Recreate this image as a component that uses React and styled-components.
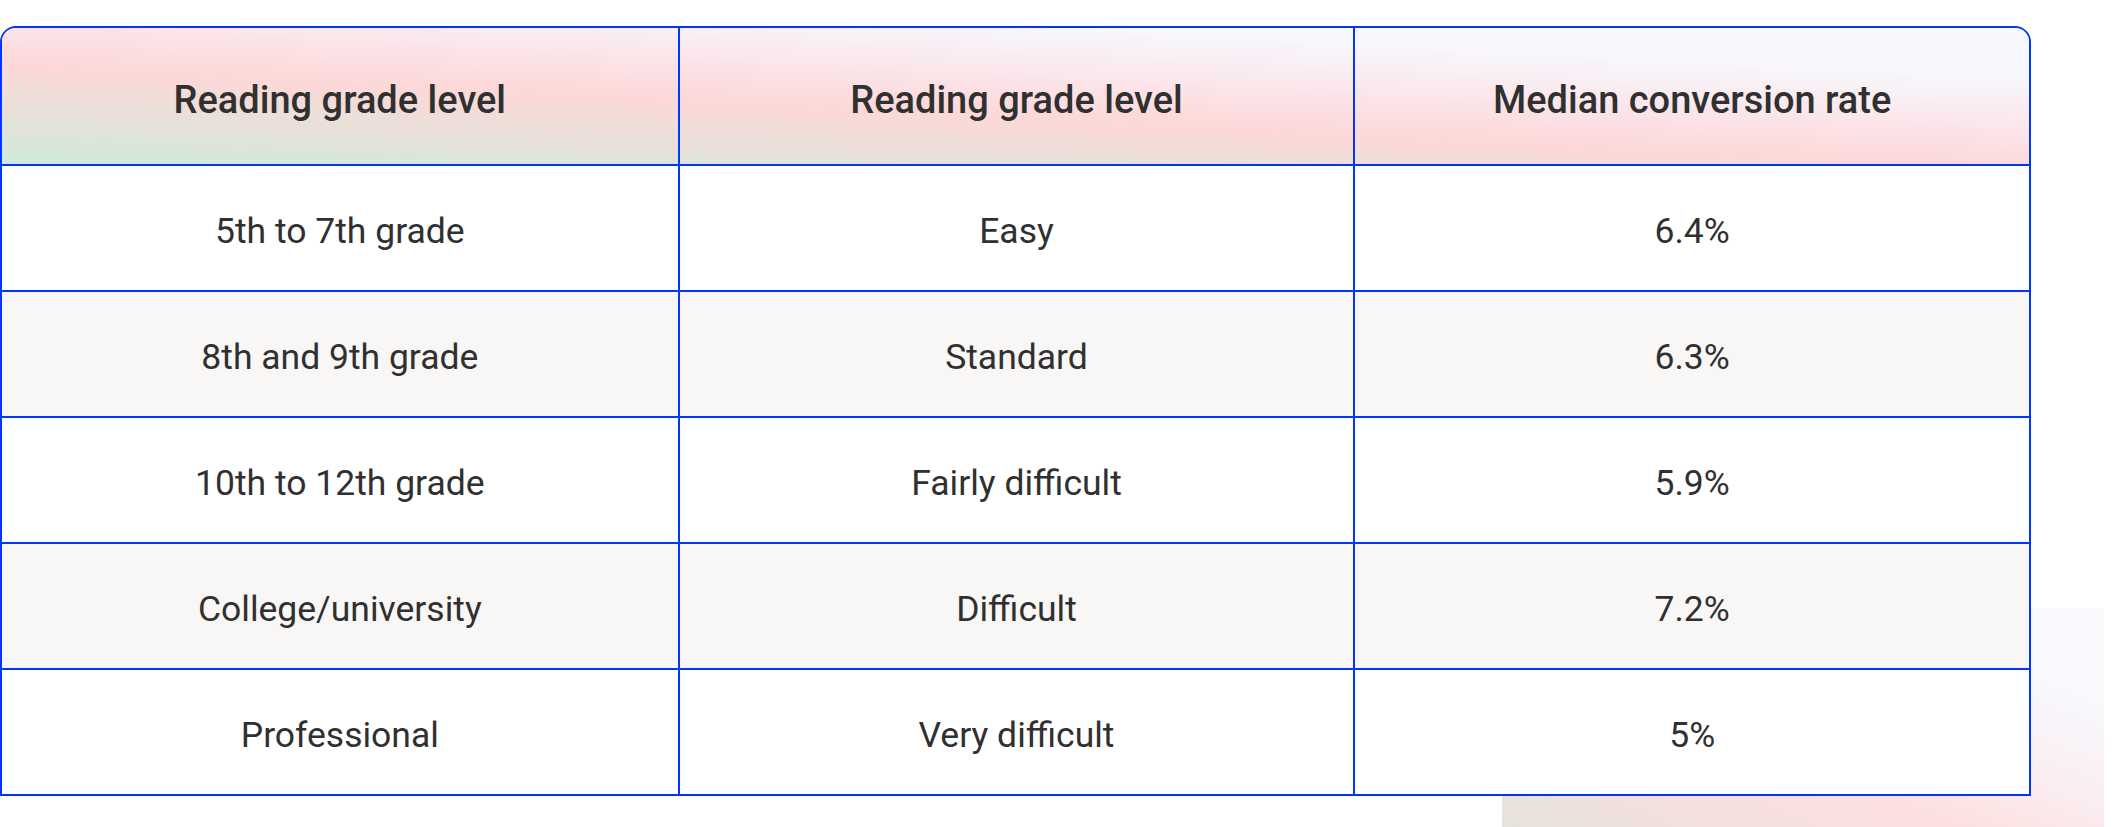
import styled, { createGlobalStyle } from 'styled-components';

const GlobalStyle = createGlobalStyle`
  html, body {
    margin: 0;
    padding: 0;
    background: #fff;
  }
  body {
    font-family: Roboto, "Liberation Sans", sans-serif;
    color: #2e2e2e;
  }
`;

const Page = styled.div`
  position: relative;
  width: 2122px;
  height: 827px;
  overflow: hidden;
  padding-top: 26px;
  box-sizing: border-box;
`;

const Glow = styled.div`
  position: absolute;
  left: 1502px;
  top: 608px;
  width: 602px;
  height: 260px;
  background: linear-gradient(22deg, #dfe5db 0%, #f1e0dd 22%, #fde0e0 45%, #faeef2 62%, #f8f8fd 80%);
  z-index: 0;
`;

const Table = styled.div`
  position: relative;
  z-index: 1;
  width: 2031px;
  box-sizing: border-box;
  border: 2px solid #0036ff;
  border-radius: 16px 16px 0 0;
  overflow: hidden;
  background: #fff;
`;

const Row = styled.div`
  display: grid;
  grid-template-columns: repeat(3, 1fr);
  height: ${(p) => (p.$head ? '136px' : '124px')};
  border-bottom: ${(p) => (p.$last ? 'none' : '2px solid #0036ff')};
  background: ${(p) =>
    p.$head
      ? 'linear-gradient(3deg, #cfeadb 0%, #e6e1d9 20%, #fdd8d8 42%, #fbe5ea 58%, #f7f8fd 80%)'
      : p.$shade
      ? '#f8f7f5'
      : '#fff'};
`;

const Cell = styled.div`
  display: flex;
  align-items: center;
  justify-content: center;
  box-sizing: border-box;
  padding-top: ${(p) => (p.$head ? '8px' : '6px')};
  font-size: ${(p) => (p.$head ? '38px' : '35.5px')};
  font-weight: ${(p) => (p.$head ? 500 : 400)};
  color: #303030;
  & + & {
    border-left: 2px solid #0036ff;
  }
`;

const head = ['Reading grade level', 'Reading grade level', 'Median conversion rate'];

const rows = [
  ['5th to 7th grade', 'Easy', '6.4%'],
  ['8th and 9th grade', 'Standard', '6.3%'],
  ['10th to 12th grade', 'Fairly difficult', '5.9%'],
  ['College/university', 'Difficult', '7.2%'],
  ['Professional', 'Very difficult', '5%'],
];

export default function App() {
  return (
    <>
      <GlobalStyle />
      <Page>
        <Glow />
        <Table>
          <Row $head>
            {head.map((h, i) => (
              <Cell key={i} $head>
                {h}
              </Cell>
            ))}
          </Row>
          {rows.map((r, i) => (
            <Row key={i} $shade={i % 2 === 1} $last={i === rows.length - 1}>
              {r.map((c, j) => (
                <Cell key={j}>{c}</Cell>
              ))}
            </Row>
          ))}
        </Table>
      </Page>
    </>
  );
}
